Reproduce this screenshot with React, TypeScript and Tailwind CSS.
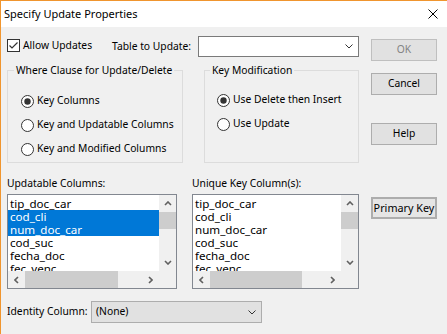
import { clsx } from "clsx";

const updatable = ["tip_doc_car", "cod_cli", "num_doc_car", "cod_suc", "fecha_doc", "fec_venc"];
const selectedCols = ["cod_cli", "num_doc_car"];

function Chevron({ className }: { className?: string }) {
  return (
    <svg width="8" height="5" viewBox="0 0 8 5" className={className}>
      <polyline points="0.5,0.5 4,4 7.5,0.5" fill="none" stroke="currentColor" strokeWidth={1} />
    </svg>
  );
}

function ScrollArrow({ dir }: { dir: "down" | "up" | "left" | "right" }) {
  const vertical = dir === "down" || dir === "up";
  const points = {
    down: "1,1 4,4 7,1",
    up: "1,4 4,1 7,4",
    left: "4,1 1,4 4,7",
    right: "1,1 4,4 1,7",
  }[dir];
  return (
    <div className="flex h-[17px] w-[17px] shrink-0 items-center justify-center text-[#606060]">
      <svg width={vertical ? 8 : 5} height={vertical ? 5 : 8} viewBox={vertical ? "0 0 8 5" : "0 0 5 8"}>
        <polyline points={points} fill="none" stroke="currentColor" strokeWidth={1.6} />
      </svg>
    </div>
  );
}

function Radio({ checked, label }: { checked?: boolean; label: string }) {
  return (
    <div className="flex h-[24px] items-center whitespace-nowrap">
      <svg width="13" height="13" viewBox="0 0 13 13" className="shrink-0">
        <circle cx="6.5" cy="6.5" r="6" fill="#fff" stroke="#333" strokeWidth={1} />
        {checked && <circle cx="6.5" cy="6.5" r="3.2" fill="#333" />}
      </svg>
      <span className="ml-[3px]">{label}</span>
    </div>
  );
}

function ListBox({ items, selected, thumb }: { items: string[]; selected: string[]; thumb: number }) {
  return (
    <div className="mt-[3px] flex h-[95px] flex-col border border-[#828790] bg-white">
      <div className="flex h-[76px]">
        <div className="min-w-0 flex-1 overflow-hidden pt-[2px] text-[11.6px] leading-[13px]">
          {items.map((item) => (
            <div
              key={item}
              className={clsx(
                "h-[13px] whitespace-nowrap pl-[2px]",
                selected.includes(item) && "bg-[#0078d7] text-white",
              )}
            >
              {item}
            </div>
          ))}
        </div>
        <div className="flex w-[17px] flex-col bg-[#f0f0f0]">
          <ScrollArrow dir="up" />
          <div className="h-[17px] bg-[#cdcdcd]" />
          <div className="flex-1" />
          <ScrollArrow dir="down" />
        </div>
      </div>
      <div className="flex h-[17px] bg-[#f0f0f0]">
        <ScrollArrow dir="left" />
        <div className="bg-[#cdcdcd]" style={{ width: thumb }} />
        <div className="flex-1" />
        <ScrollArrow dir="right" />
        <div className="w-[17px]" />
      </div>
    </div>
  );
}

function Button({ children, className }: { children: React.ReactNode; className?: string }) {
  return (
    <div
      className={clsx(
        "flex h-[22px] w-[66px] items-center justify-center whitespace-nowrap border border-[#adadad] bg-[#e1e1e1]",
        className,
      )}
    >
      {children}
    </div>
  );
}

export default function App() {
  return (
    <div className="flex h-[334px] w-[447px] flex-col overflow-hidden border-l border-t border-[#f0952e] bg-[#f0f0f0] font-['Noto_Sans','Liberation_Sans',sans-serif] text-[10.3px] text-black">
      <div className="flex h-[26px] shrink-0 items-center justify-between bg-white pl-[3px] pr-[9px]">
        <span className="text-[11px]">Specify Update Properties</span>
        <svg width="10" height="10" viewBox="0 0 10 10">
          <path d="M0.5 0.5 L9.5 9.5 M9.5 0.5 L0.5 9.5" stroke="#000" strokeWidth={1} />
        </svg>
      </div>

      <div className="flex pl-[6px] pt-[9px]">
        <div className="flex w-[352px] flex-col">
          <div className="flex h-[21px] items-center whitespace-nowrap">
            <div className="mb-[2px] flex w-[105px] items-center">
              <svg width="13" height="13" viewBox="0 0 13 13" className="shrink-0">
                <rect x="0.5" y="0.5" width="12" height="12" fill="#fff" stroke="#333" />
                <polyline points="2.5,6.5 5,9 10.5,3.5" fill="none" stroke="#333" strokeWidth={1.2} />
              </svg>
              <span className="ml-[3px]">Allow Updates</span>
            </div>
            <span>Table to Update:</span>
            <div className="ml-auto flex h-[21px] w-[161px] items-center justify-end border border-[#7a7a7a] bg-white pr-[5px] text-[#333]">
              <Chevron />
            </div>
          </div>

          <div className="mt-[5px] flex">
            <fieldset className="h-[101px] w-[176px] border border-[#dcdcdc]">
              <legend className="ml-[6px] whitespace-nowrap px-[2px] leading-[16px]">Where Clause for Update/Delete</legend>
              <div className="pl-[13px] pt-[11px]">
                <Radio checked label="Key Columns" />
                <Radio label="Key and Updatable Columns" />
                <Radio label="Key and Modified Columns" />
              </div>
            </fieldset>
            <fieldset className="ml-auto h-[101px] w-[155px] border border-[#dcdcdc]">
              <legend className="ml-[5px] whitespace-nowrap px-[2px] leading-[16px]">Key Modification</legend>
              <div className="pl-[12px] pt-[10px]">
                <Radio checked label="Use Delete then Insert" />
                <Radio label="Use Update" />
              </div>
            </fieldset>
          </div>

          <div className="mt-[12px] flex whitespace-nowrap">
            <div className="flex w-[170px] flex-col">
              <span className="leading-[16px]">Updatable Columns:</span>
              <ListBox items={updatable} selected={selectedCols} thumb={93} />
            </div>
            <div className="ml-auto flex w-[167px] flex-col">
              <span className="leading-[16px]">Unique Key Column(s):</span>
              <ListBox items={updatable} selected={[]} thumb={92} />
            </div>
          </div>

          <div className="mt-[12px] flex h-[22px] items-center whitespace-nowrap">
            <span className="w-[84px]">Identity Column:</span>
            <div className="flex h-[22px] w-[171px] items-center justify-between border border-[#adadad] bg-[#e1e1e1] pl-[4px] pr-[5px]">
              <span>(None)</span>
              <Chevron className="text-[#333]" />
            </div>
          </div>
        </div>

        <div className="ml-[12px] flex w-[66px] flex-col">
          <Button className="mt-[3px] border-[#bfbfbf] bg-[#cccccc] text-[#838383]">OK</Button>
          <Button className="mt-[12px]">Cancel</Button>
          <Button className="mt-[28px]">Help</Button>
          <Button className="mt-[52px] border-2 border-[#0078d7] bg-[#e5e5e5] text-[10.8px]">Primary Key</Button>
        </div>
      </div>
    </div>
  );
}
